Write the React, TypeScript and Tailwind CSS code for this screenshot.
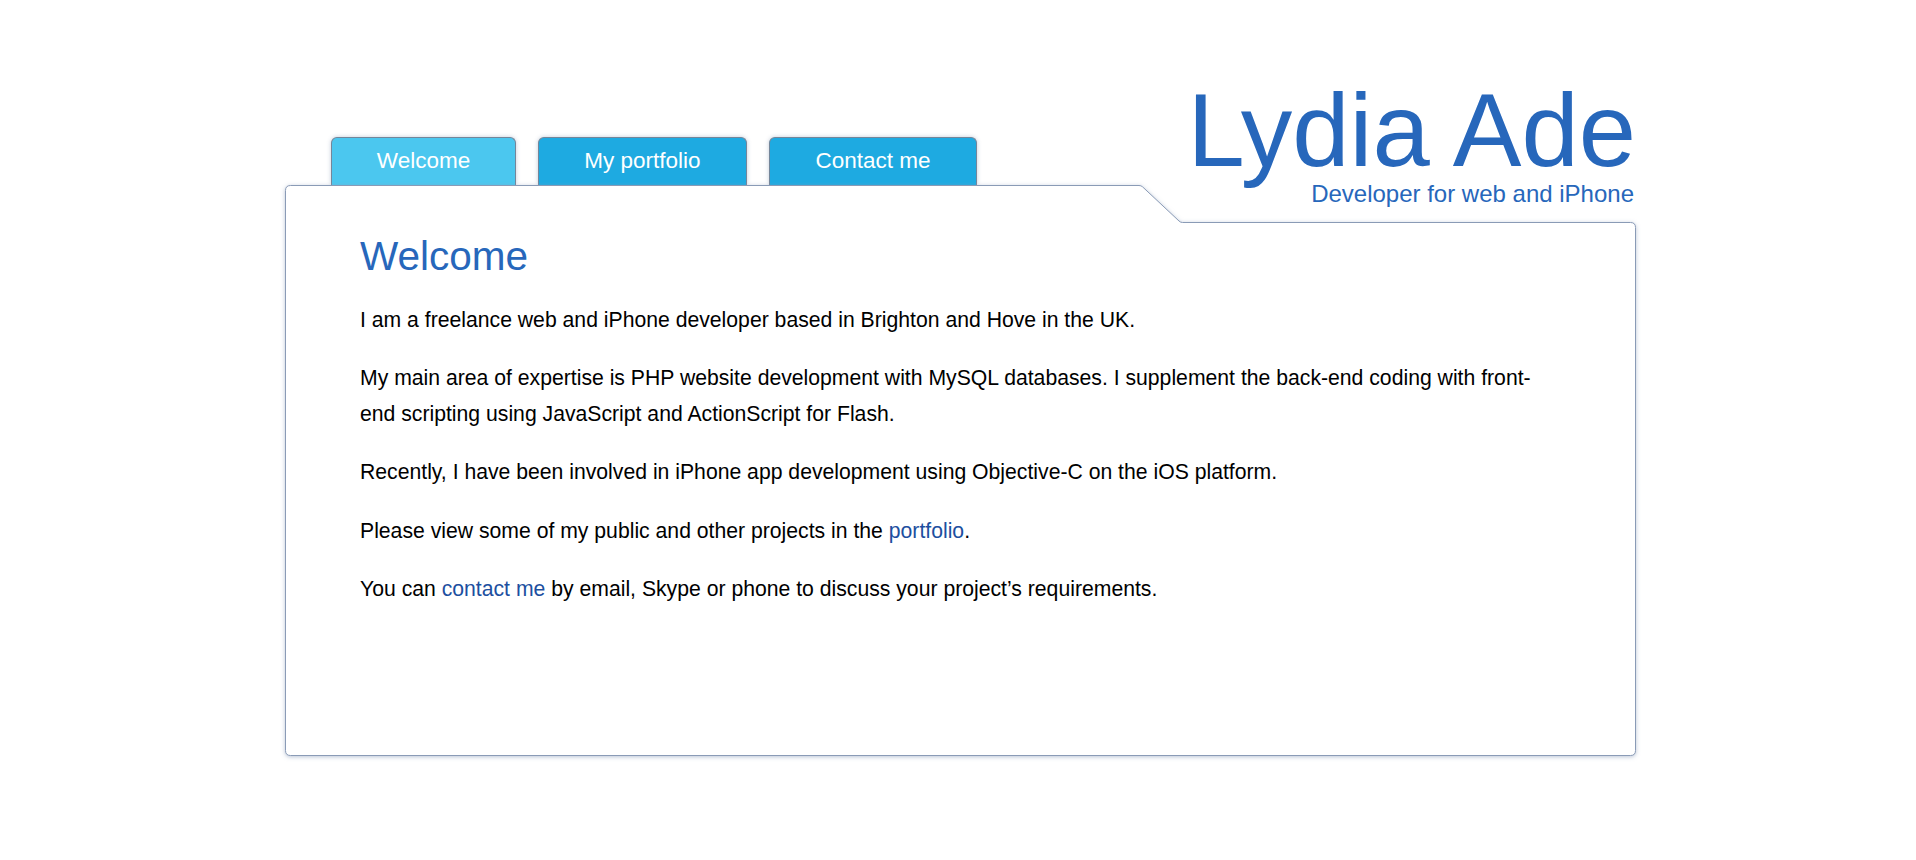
import React from "react";

const font = { fontFamily: '"Liberation Sans", Arial, Helvetica, sans-serif' };

function PanelShape() {
  return (
    <svg
      className="absolute left-0 top-0 overflow-visible pointer-events-none"
      width="1351"
      height="571"
      viewBox="0 0 1351 571"
    >
      <defs>
        <filter id="ps" x="-5%" y="-10%" width="110%" height="120%">
          <feDropShadow dx="0" dy="1" stdDeviation="2.2" floodColor="#8a9cba" floodOpacity="0.6" />
        </filter>
      </defs>
      <path
        d="M 0.5 5.5 Q 0.5 0.5 5.5 0.5 L 854 0.5 Q 856 0.5 857.5 1.8 L 894 36 Q 895.5 37.5 897.5 37.5 L 1345.5 37.5 Q 1350.5 37.5 1350.5 42.5 L 1350.5 565.5 Q 1350.5 570.5 1345.5 570.5 L 5.5 570.5 Q 0.5 570.5 0.5 565.5 Z"
        fill="#ffffff"
        stroke="#8a9bb6"
        strokeWidth="1"
        filter="url(#ps)"
      />
    </svg>
  );
}

function Tab({ label, active, width }: { label: string; active?: boolean; width: string }) {
  return (
    <div
      className={
        "h-[48px] flex items-center justify-center rounded-t-[6px] border border-b-0 border-[#74869a] text-white text-[22.5px] shadow-[0_0_4px_rgba(120,140,170,0.45)] " +
        width +
        (active ? " bg-[#4bc7ef]" : " bg-[#1eaae1]")
      }
    >
      <span className="leading-none">{label}</span>
    </div>
  );
}

export default function App() {
  return (
    <div className="min-h-[860px] bg-white pt-[82.5px] pl-[5px] flex justify-center" style={font}>
      <div className="w-[1351px]">
        <div className="flex items-end justify-between">
          <div className="flex gap-[22px] pl-[46px]">
            <Tab label="Welcome" active width="w-[185px]" />
            <Tab label="My portfolio" width="w-[209px]" />
            <Tab label="Contact me" width="w-[208px]" />
          </div>
          <div className="relative z-10 -mb-[22.5px] text-right text-[#2767bb]">
            <div className="text-[103px] leading-[96px]">Lydia Ade</div>
            <div className="mt-[1px] pr-[2px] text-[24px] leading-[28px]">Developer for web and iPhone</div>
          </div>
        </div>
        <div className="relative h-[571px]">
          <PanelShape />
          <div className="relative pl-[75px] pr-[88px] pt-[47px]">
            <h1 className="text-[40.5px] leading-[48px] text-[#2767bb] mb-[21.5px]">Welcome</h1>
            <div className="text-[21.2px] leading-[35.5px] text-black">
              <p className="mb-[23px]">I am a freelance web and iPhone developer based in Brighton and Hove in the UK.</p>
              <p className="mb-[23px]">
                My main area of expertise is PHP website development with MySQL databases. I supplement the back-end coding with front-end scripting using JavaScript and ActionScript for Flash.
              </p>
              <p className="mb-[23px]">Recently, I have been involved in iPhone app development using Objective-C on the iOS platform.</p>
              <p className="mb-[23px]">
                Please view some of my public and other projects in the <a className="text-[#1d4f9f]">portfolio</a>.
              </p>
              <p className="mb-[23px]">
                You can <a className="text-[#1d4f9f]">contact me</a> by email, Skype or phone to discuss your project’s requirements.
              </p>
            </div>
          </div>
        </div>
      </div>
    </div>
  );
}
